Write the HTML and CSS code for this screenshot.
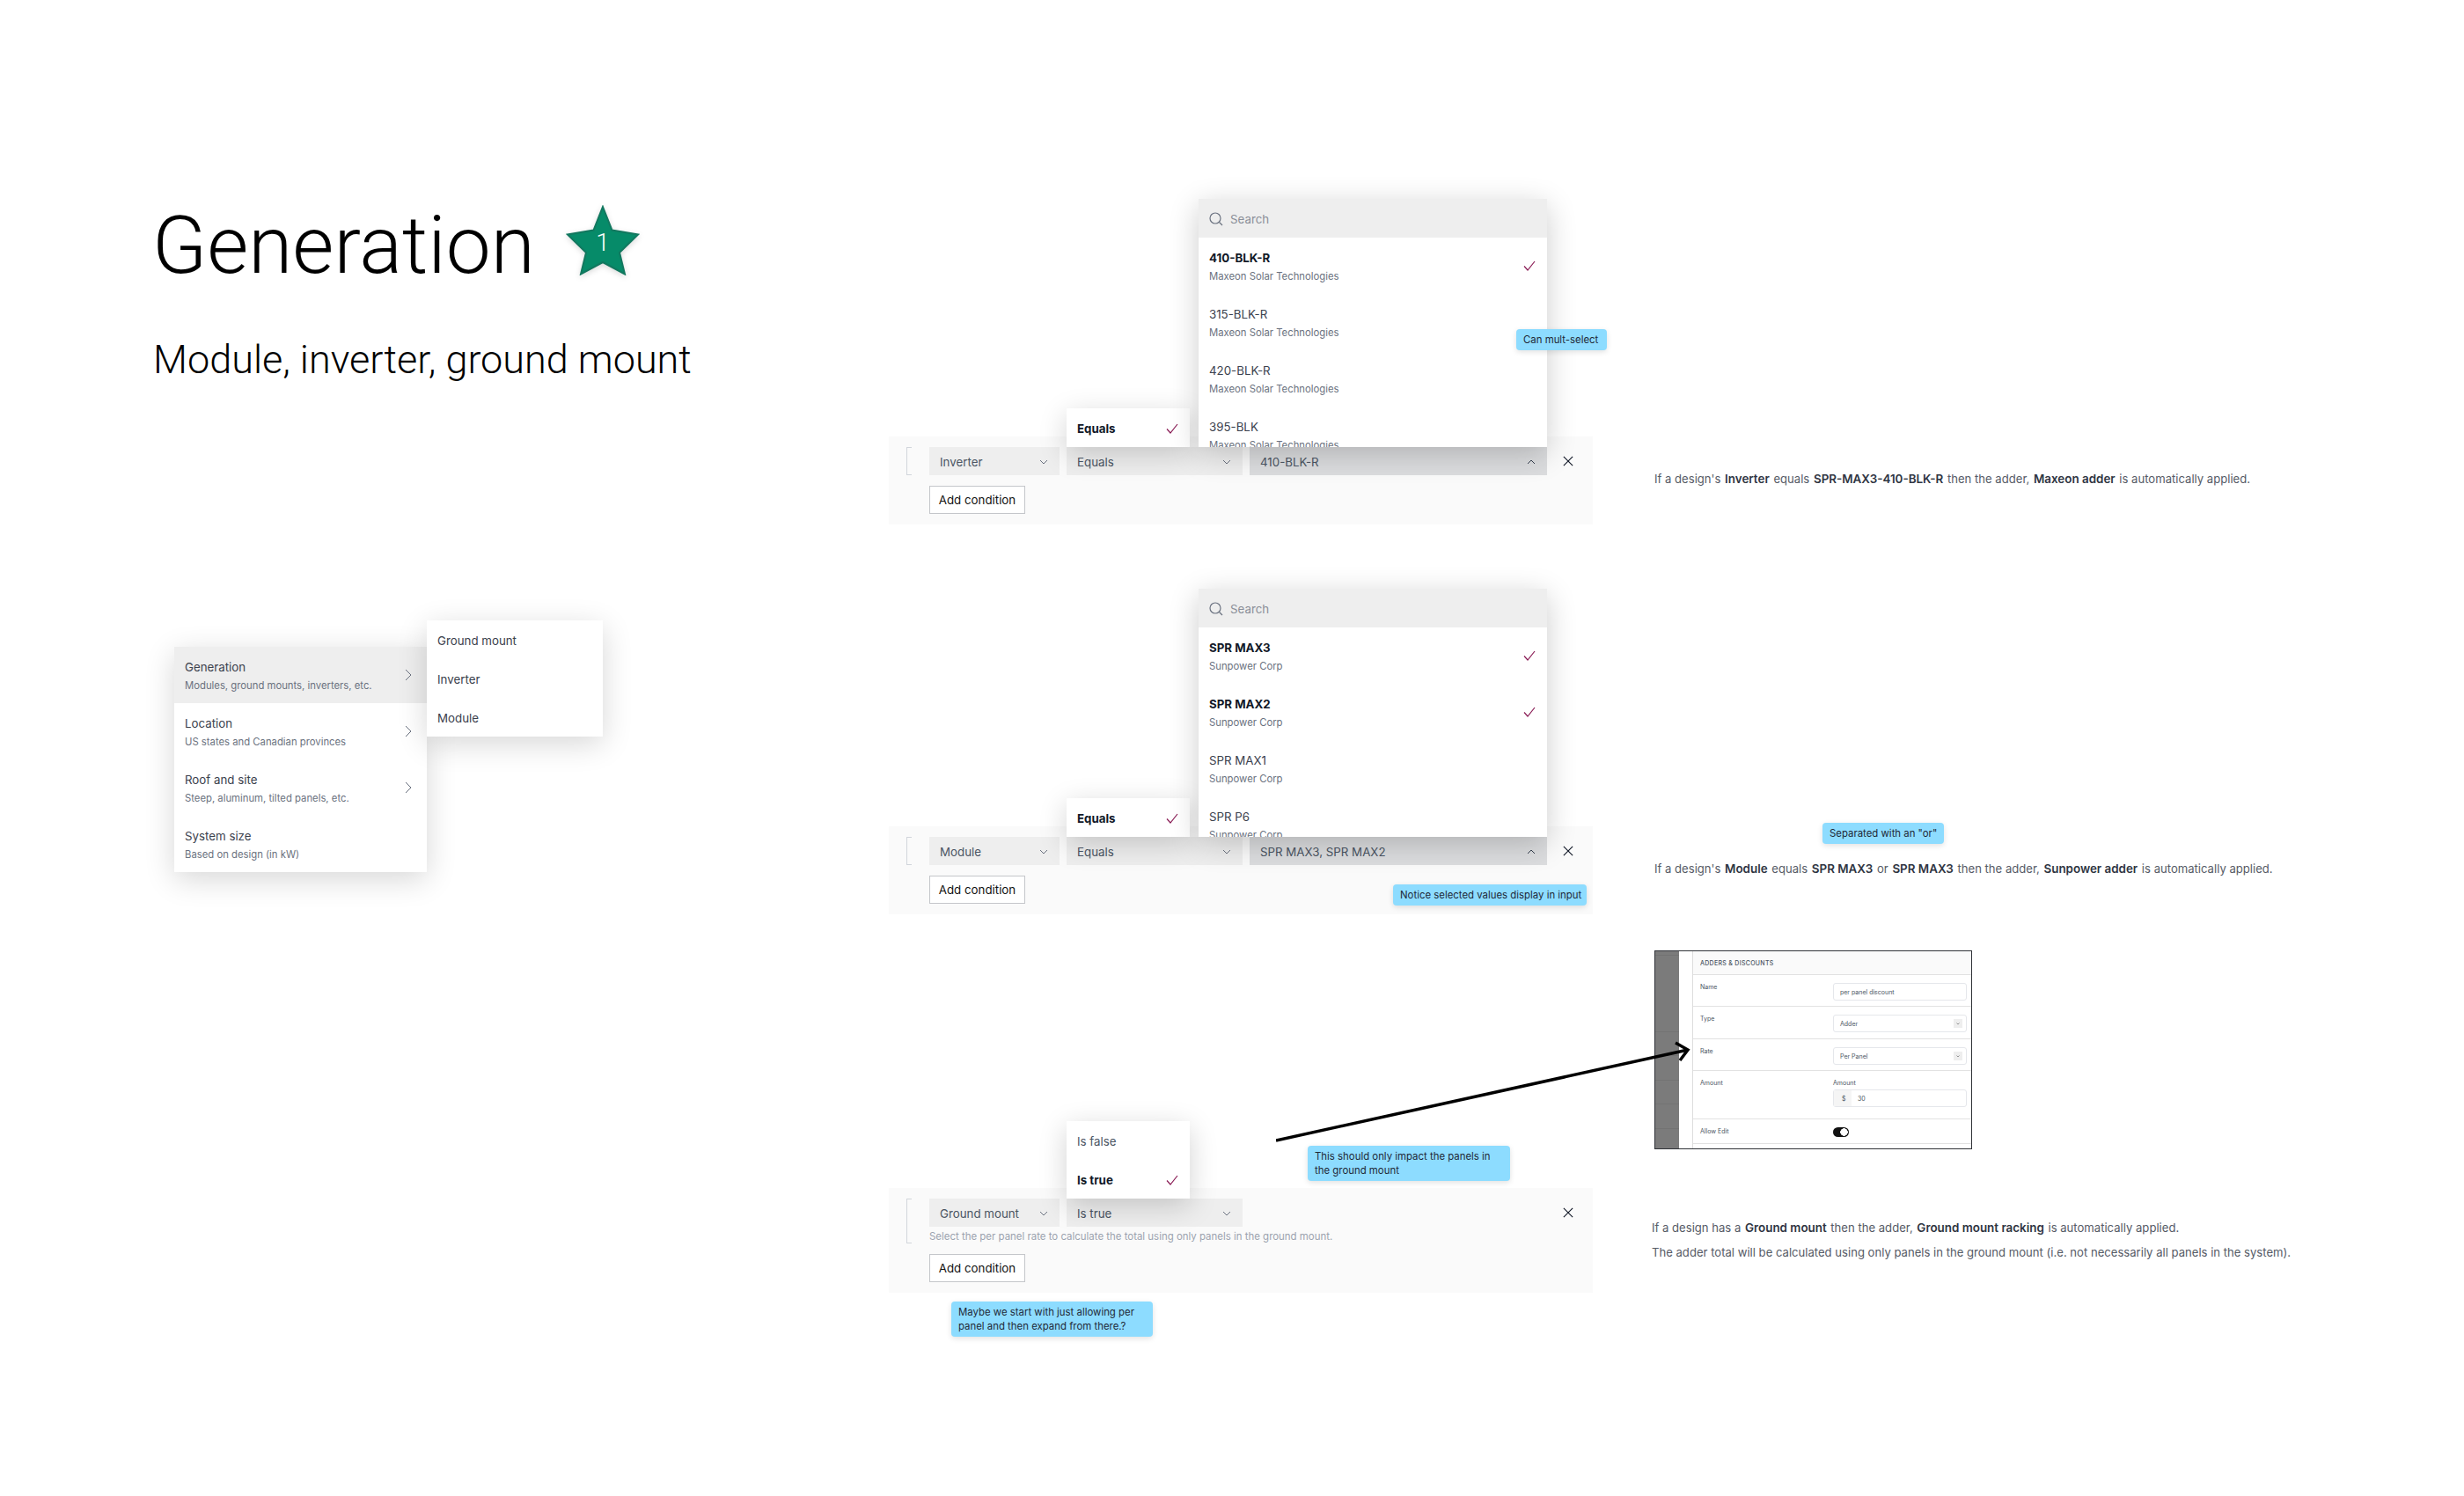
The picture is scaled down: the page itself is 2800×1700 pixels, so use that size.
FILE: index.html
```html
<!DOCTYPE html>
<html lang="en">
<head>
    <meta charset="UTF-8">
    <meta name="viewport" content="width=device-width, initial-scale=1.0">
    <title>Generation</title>
    <link rel="stylesheet" href="styles.css">
</head>
<body>
<div class="canvas">
    <!-- Heading -->
    <h1 class="page-title">Generation</h1>
    <svg class="star" viewBox="0 0 84 80">
        <path d="M42 2 L52.500 28.500 L82 33.500 L61 54 L67 78.500 L42 65 L17 78.500 L23 54 L2 33.500 L31.500 28.500 Z" fill="#068b69" stroke="#12785f" stroke-width="2"/>
    </svg>
    <span class="star-num">1</span>
    <p class="page-sub">Module, inverter, ground mount</p>

    <!-- Category menu -->
    <div class="menu">
        <div class="menu-item active">
            <div><div class="item-title">Generation</div><div class="item-sub">Modules, ground mounts, inverters, etc.</div></div>
            <svg class="menu-chevron" viewBox="0 0 8 14"><path d="M1 1 L7 7 L1 13"/></svg>
        </div>
        <div class="menu-item">
            <div><div class="item-title">Location</div><div class="item-sub">US states and Canadian provinces</div></div>
            <svg class="menu-chevron" viewBox="0 0 8 14"><path d="M1 1 L7 7 L1 13"/></svg>
        </div>
        <div class="menu-item">
            <div><div class="item-title">Roof and site</div><div class="item-sub">Steep, aluminum, tilted panels, etc.</div></div>
            <svg class="menu-chevron" viewBox="0 0 8 14"><path d="M1 1 L7 7 L1 13"/></svg>
        </div>
        <div class="menu-item">
            <div><div class="item-title">System size</div><div class="item-sub">Based on design (in kW)</div></div>
        </div>
    </div>
    <div class="submenu">
        <div class="submenu-item">Ground mount</div>
        <div class="submenu-item">Inverter</div>
        <div class="submenu-item">Module</div>
    </div>

    <!-- Inverter condition -->
    <div class="condition cond-inverter">
        <div class="cond-body">
            <div class="bracket"></div>
            <div class="cond-main">
                <div class="cond-row">
                    <div class="select sel-field">Inverter<svg class="chev" viewBox="0 0 10 6"><path d="M1 1 L5 5 L9 1"/></svg></div>
                    <div class="select sel-op">Equals<svg class="chev" viewBox="0 0 10 6"><path d="M1 1 L5 5 L9 1"/></svg></div>
                    <div class="select sel-value">410-BLK-R<svg class="chev" viewBox="0 0 10 6"><path d="M1 5 L5 1 L9 5"/></svg></div>
                    <svg class="remove" viewBox="0 0 14 14"><path d="M1 1 L13 13 M13 1 L1 13"/></svg>
                </div>
            </div>
        </div>
        <div class="add-btn">Add condition</div>

        <div class="popover pop-one">
            <div class="pop-item selected">Equals<svg class="check" viewBox="0 0 14 12"><path d="M1 6.500 L5 11 L13 1"/></svg></div>
        </div>
        <div class="dropdown">
            <div class="search">
                <svg class="search-icon" viewBox="0 0 16 16"><circle cx="7" cy="7" r="6"/><path d="M11.500 11.500 L15 15"/></svg>
                Search
            </div>
            <div class="option selected">
                <div><div class="item-title">410-BLK-R</div><div class="item-sub">Maxeon Solar Technologies</div></div>
                <svg class="check" viewBox="0 0 14 12"><path d="M1 6.500 L5 11 L13 1"/></svg>
            </div>
            <div class="option"><div><div class="item-title">315-BLK-R</div><div class="item-sub">Maxeon Solar Technologies</div></div></div>
            <div class="option"><div><div class="item-title">420-BLK-R</div><div class="item-sub">Maxeon Solar Technologies</div></div></div>
            <div class="option"><div><div class="item-title">395-BLK</div><div class="item-sub">Maxeon Solar Technologies</div></div></div>
        </div>
    </div>

    <!-- Module condition -->
    <div class="condition cond-module">
        <div class="cond-body">
            <div class="bracket"></div>
            <div class="cond-main">
                <div class="cond-row">
                    <div class="select sel-field">Module<svg class="chev" viewBox="0 0 10 6"><path d="M1 1 L5 5 L9 1"/></svg></div>
                    <div class="select sel-op">Equals<svg class="chev" viewBox="0 0 10 6"><path d="M1 1 L5 5 L9 1"/></svg></div>
                    <div class="select sel-value">SPR MAX3, SPR MAX2<svg class="chev" viewBox="0 0 10 6"><path d="M1 5 L5 1 L9 5"/></svg></div>
                    <svg class="remove" viewBox="0 0 14 14"><path d="M1 1 L13 13 M13 1 L1 13"/></svg>
                </div>
            </div>
        </div>
        <div class="add-btn">Add condition</div>

        <div class="popover pop-one">
            <div class="pop-item selected">Equals<svg class="check" viewBox="0 0 14 12"><path d="M1 6.500 L5 11 L13 1"/></svg></div>
        </div>
        <div class="dropdown">
            <div class="search">
                <svg class="search-icon" viewBox="0 0 16 16"><circle cx="7" cy="7" r="6"/><path d="M11.500 11.500 L15 15"/></svg>
                Search
            </div>
            <div class="option selected">
                <div><div class="item-title">SPR MAX3</div><div class="item-sub">Sunpower Corp</div></div>
                <svg class="check" viewBox="0 0 14 12"><path d="M1 6.500 L5 11 L13 1"/></svg>
            </div>
            <div class="option selected">
                <div><div class="item-title">SPR MAX2</div><div class="item-sub">Sunpower Corp</div></div>
                <svg class="check" viewBox="0 0 14 12"><path d="M1 6.500 L5 11 L13 1"/></svg>
            </div>
            <div class="option"><div><div class="item-title">SPR MAX1</div><div class="item-sub">Sunpower Corp</div></div></div>
            <div class="option"><div><div class="item-title">SPR P6</div><div class="item-sub">Sunpower Corp</div></div></div>
        </div>
    </div>

    <!-- Ground mount condition -->
    <div class="condition cond-ground">
        <div class="cond-body">
            <div class="bracket"></div>
            <div class="cond-main">
                <div class="cond-row">
                    <div class="select sel-field">Ground mount<svg class="chev" viewBox="0 0 10 6"><path d="M1 1 L5 5 L9 1"/></svg></div>
                    <div class="select sel-op">Is true<svg class="chev" viewBox="0 0 10 6"><path d="M1 1 L5 5 L9 1"/></svg></div>
                    <svg class="remove push" viewBox="0 0 14 14"><path d="M1 1 L13 13 M13 1 L1 13"/></svg>
                </div>
                <div class="cond-help">Select the per panel rate to calculate the total using only panels in the ground mount.</div>
            </div>
        </div>
        <div class="add-btn">Add condition</div>

        <div class="popover pop-two">
            <div class="pop-item">Is false</div>
            <div class="pop-item selected">Is true<svg class="check" viewBox="0 0 14 12"><path d="M1 6.500 L5 11 L13 1"/></svg></div>
        </div>
    </div>

    <!-- Sticky notes -->
    <div class="note note-multi">Can mult-select</div>
    <div class="note note-or">Separated with an "or"</div>
    <div class="note note-notice">Notice selected values display in input</div>
    <div class="note note-impact">This should only impact the panels in<br>the ground mount</div>
    <div class="note note-maybe">Maybe we start with just allowing per<br>panel and then expand from there.?</div>

    <!-- Descriptions -->
    <p class="desc desc-one">If a design's <b>Inverter</b> equals <b>SPR-MAX3-410-BLK-R</b> then the adder, <b>Maxeon adder</b> is automatically applied.</p>
    <p class="desc desc-two">If a design's <b>Module</b> equals <b>SPR MAX3</b> or <b>SPR MAX3</b> then the adder, <b>Sunpower adder</b> is automatically applied.</p>
    <p class="desc desc-three">If a design has a <b>Ground mount</b> then the adder, <b>Ground mount racking</b> is automatically applied.</p>
    <p class="desc desc-four">The adder total will be calculated using only panels in the ground mount (i.e. not necessarily all panels in the system).</p>

    <!-- Pasted screenshot of the adder form -->
    <div class="shot">
        <div class="shot-side">
            <div class="side-a"></div>
            <div class="side-b"></div>
            <div class="side-c"></div>
            <div class="side-d"></div>
            <div class="side-c"></div>
            <div class="side-d"></div>
        </div>
        <div class="shot-gutter"></div>
        <div class="shot-main">
            <div class="shot-head">ADDERS &amp; DISCOUNTS</div>
            <div class="shot-row row-name"><span>Name</span><div class="shot-input">per panel discount</div></div>
            <div class="shot-row row-type"><span>Type</span><div class="shot-input">Adder<svg class="shot-caret" viewBox="0 0 10 10"><path d="M3.500 4.500 L5 6 L6.500 4.500"/></svg></div></div>
            <div class="shot-row row-rate"><span>Rate</span><div class="shot-input">Per Panel<svg class="shot-caret" viewBox="0 0 10 10"><path d="M3.500 4.500 L5 6 L6.500 4.500"/></svg></div></div>
            <div class="shot-row row-amount"><span>Amount</span>
                <div class="shot-field">Amount<div class="shot-input money"><em>$</em>30</div></div>
            </div>
            <div class="shot-row row-edit"><span>Allow Edit</span><div class="shot-toggle"></div></div>
        </div>
    </div>

    <!-- Arrow pointing at the screenshot -->
    <svg class="arrow" viewBox="0 0 480 120">
        <path d="M0 116 L468 13" fill="none" stroke="#000" stroke-width="3.500"/>
        <path d="M454 5 L468 13 L459 25" fill="none" stroke="#000" stroke-width="3.500"/>
    </svg>
</div>
</body>
</html>
```

FILE: styles.css
```css
* {
    box-sizing: border-box;
}

body {
    margin: 0;
    background-color: #fff;
    font-family: 'Inter', 'Liberation Sans', sans-serif;
    color: #374151;
}

.canvas {
    position: relative;
    width: 2800px;
    height: 1700px;
    overflow: hidden;
}

/* Heading */
.page-title {
    position: absolute;
    left: 173px;
    top: 228px;
    margin: 0;
    font-family: 'Roboto', 'Liberation Sans', sans-serif;
    font-weight: 300;
    font-size: 91px;
    line-height: 102px;
    color: #000;
}

.page-sub {
    position: absolute;
    left: 174px;
    top: 382px;
    margin: 0;
    font-family: 'Roboto', 'Liberation Sans', sans-serif;
    font-weight: 300;
    font-size: 45px;
    line-height: 54px;
    color: #000;
}

.star {
    position: absolute;
    left: 643px;
    top: 233px;
    width: 84px;
    height: 80px;
    filter: drop-shadow(0 2px 3px rgba(0, 0, 0, 0.15));
}

.star-num {
    position: absolute;
    left: 675px;
    top: 260px;
    width: 20px;
    text-align: center;
    font-family: 'Roboto', sans-serif;
    font-weight: 300;
    font-size: 28px;
    line-height: 32px;
    color: #fff;
}

/* Category menu */
.menu {
    position: absolute;
    left: 198px;
    top: 735px;
    width: 287px;
    background: #fff;
    box-shadow: 0 8px 32px rgba(0, 0, 0, 0.16);
}

.menu-item {
    display: flex;
    align-items: center;
    justify-content: space-between;
    height: 64px;
    padding: 0 17px 0 12px;
}

.menu-item.active {
    background: #eee;
}

.menu-chevron {
    width: 8px;
    height: 14px;
    fill: none;
    stroke: #6b7280;
    stroke-width: 1;
}

.item-title {
    font-size: 13.300px;
    line-height: 20px;
    color: #3b414d;
}

.item-sub {
    margin-top: 3px;
    font-size: 11.300px;
    line-height: 16px;
    color: #6b7280;
}

.submenu {
    position: absolute;
    left: 485px;
    top: 705px;
    width: 200px;
    background: #fff;
    box-shadow: 0 8px 32px rgba(0, 0, 0, 0.16);
}

.submenu-item {
    display: flex;
    align-items: center;
    height: 44px;
    padding: 1px 12px 0;
    font-size: 13.300px;
    color: #3b414d;
}

/* Condition panels */
.condition {
    position: absolute;
    left: 1010px;
    width: 800px;
    padding: 12px 0 12px 20px;
    background: #fafafa;
}

.cond-inverter {
    top: 496px;
}

.cond-module {
    top: 939px;
}

.cond-ground {
    top: 1350px;
}

.cond-body {
    display: flex;
}

.bracket {
    width: 6px;
    margin-right: 20px;
    border: 1px solid #d1d5db;
    border-right: none;
}

.cond-main {
    width: 734px;
}

.cond-row {
    display: flex;
    align-items: center;
    gap: 8px;
}

.select {
    display: flex;
    align-items: center;
    justify-content: space-between;
    height: 32px;
    padding: 1px 13px 0 12px;
    background: #eee;
    font-size: 13.300px;
    color: #4b5563;
}

.sel-field {
    width: 148px;
}

.sel-op {
    width: 200px;
}

.sel-value {
    width: 338px;
    background: #dcdddf;
}

.sel-value .chev {
    stroke: #374151;
}

.chev {
    width: 10px;
    height: 6px;
    fill: none;
    stroke: #6b7280;
    stroke-width: 1;
}

.remove {
    width: 12px;
    height: 12px;
    margin-left: 10px;
    fill: none;
    stroke: #111827;
    stroke-width: 1.300;
}

.remove.push {
    margin-left: auto;
    margin-right: 2px;
}

.cond-help {
    margin-top: 3px;
    font-size: 11.450px;
    line-height: 16px;
    color: #9ca3af;
}

.add-btn {
    display: flex;
    align-items: center;
    justify-content: center;
    width: 109px;
    height: 32px;
    margin: 12px 0 0 26px;
    background: #fff;
    border: 1px solid #c4c6ca;
    font-size: 13.300px;
    color: #111;
}

/* Popups above the selects */
.popover {
    position: absolute;
    left: 202px;
    width: 140px;
    background: #fff;
    box-shadow: 0 8px 32px rgba(0, 0, 0, 0.18);
}

.pop-one {
    top: -32px;
}

.pop-two {
    top: -76px;
}

.pop-item {
    display: flex;
    align-items: center;
    justify-content: space-between;
    height: 44px;
    padding: 1px 13px 0 12px;
    font-size: 13.300px;
    color: #4b5563;
}

.pop-item.selected {
    font-weight: 700;
    color: #111827;
}

.check {
    width: 14px;
    height: 12px;
    fill: none;
    stroke: #8a1c55;
    stroke-width: 1.200;
}

.dropdown {
    position: absolute;
    left: 352px;
    top: -270px;
    width: 396px;
    height: 282px;
    background: #fff;
    box-shadow: 0 8px 32px rgba(0, 0, 0, 0.2);
}

.search {
    display: flex;
    align-items: center;
    gap: 8px;
    height: 44px;
    padding: 1px 12px 0;
    background: #eee;
    font-size: 13.300px;
    color: #8b8f98;
}

.search-icon {
    width: 16px;
    height: 16px;
    fill: none;
    stroke: #6b7280;
    stroke-width: 1.200;
}

.option {
    display: flex;
    align-items: center;
    justify-content: space-between;
    height: 64px;
    padding: 0 13px 0 12px;
}

.option:last-child {
    height: 46px;
    overflow: hidden;
    align-items: flex-start;
    padding-top: 13px;
}

.option.selected .item-title {
    font-weight: 700;
    color: #111827;
}

/* Sticky notes */
.note {
    position: absolute;
    padding: 4px 8px;
    background: #8ddcff;
    border-radius: 4px;
    box-shadow: 0 2px 6px rgba(0, 0, 0, 0.12);
    font-size: 11.400px;
    line-height: 16px;
    color: #1f2937;
    white-space: nowrap;
}

.note-multi {
    left: 1723px;
    top: 374px;
    width: 103px;
}

.note-or {
    left: 2071px;
    top: 935px;
    width: 138px;
}

.note-notice {
    left: 1583px;
    top: 1005px;
    width: 220px;
}

.note-impact {
    left: 1486px;
    top: 1302px;
    width: 230px;
}

.note-maybe {
    left: 1081px;
    top: 1479px;
    width: 229px;
}

/* Descriptions */
.desc {
    position: absolute;
    margin: 0;
    font-size: 13.100px;
    line-height: 18px;
    color: #565b66;
    white-space: nowrap;
}

.desc b {
    margin: 0 1px;
    font-size: 13.400px;
    font-weight: 600;
    color: #2f3542;
}

.desc-one {
    left: 1880px;
    top: 535px;
}

.desc-two {
    left: 1880px;
    top: 978px;
}

.desc-three {
    left: 1877px;
    top: 1386px;
}

.desc-four {
    left: 1877px;
    top: 1414px;
}

/* Pasted screenshot */
.shot {
    position: absolute;
    left: 1880px;
    top: 1080px;
    width: 361px;
    height: 226px;
    display: flex;
    border: 1px solid #2f3237;
    background: #fff;
    overflow: hidden;
}

.shot-side {
    width: 27px;
    background: #7b7b7b;
}

.shot-side div {
    border-bottom: 1px solid #737373;
}

.side-a {
    height: 5px;
}

.side-b {
    height: 87px;
}

.side-c {
    height: 27px;
}

.side-d {
    height: 28px;
}

.shot-gutter {
    width: 16px;
    border-right: 1px solid #ddd;
}

.shot-main {
    flex: 1;
    font-size: 7px;
    line-height: 9px;
    color: #4b5563;
}

.shot-head {
    display: flex;
    align-items: center;
    height: 27px;
    padding-left: 8px;
    background: #fafafa;
    border-bottom: 1px solid #e2e2e2;
    font-weight: 500;
    letter-spacing: 0.3px;
}

.shot-row {
    display: flex;
    justify-content: space-between;
    padding: 9px 5px 0 8px;
    border-bottom: 1px solid #e2e2e2;
}

.row-name {
    height: 36px;
}

.row-type {
    height: 37px;
}

.row-rate {
    height: 36px;
}

.row-amount {
    height: 55px;
}

.row-edit {
    height: 28px;
}

.shot-input {
    display: flex;
    align-items: center;
    justify-content: space-between;
    width: 152px;
    height: 20px;
    padding: 0 1px 0 7px;
    border: 1px solid #e5e7eb;
    border-radius: 3px;
}

.shot-caret {
    width: 10px;
    height: 10px;
    margin-right: 3px;
    background: #eee;
    fill: none;
    stroke: #555;
    stroke-width: 0.600;
}

.shot-field {
    width: 152px;
}

.shot-input.money {
    justify-content: flex-start;
    margin-top: 3px;
    padding-left: 0;
}

.shot-input.money em {
    display: flex;
    align-items: center;
    width: 20px;
    height: 100%;
    margin-right: 7px;
    padding-left: 9px;
    background: #f5f5f5;
    font-style: normal;
}

.shot-toggle {
    width: 18px;
    height: 11px;
    margin-right: 134px;
    border-radius: 6px;
    background: radial-gradient(circle at 12.500px 5.500px, #fff 4px, #111 4.500px);
}

.arrow {
    position: absolute;
    left: 1450px;
    top: 1180px;
    width: 480px;
    height: 120px;
}
```
